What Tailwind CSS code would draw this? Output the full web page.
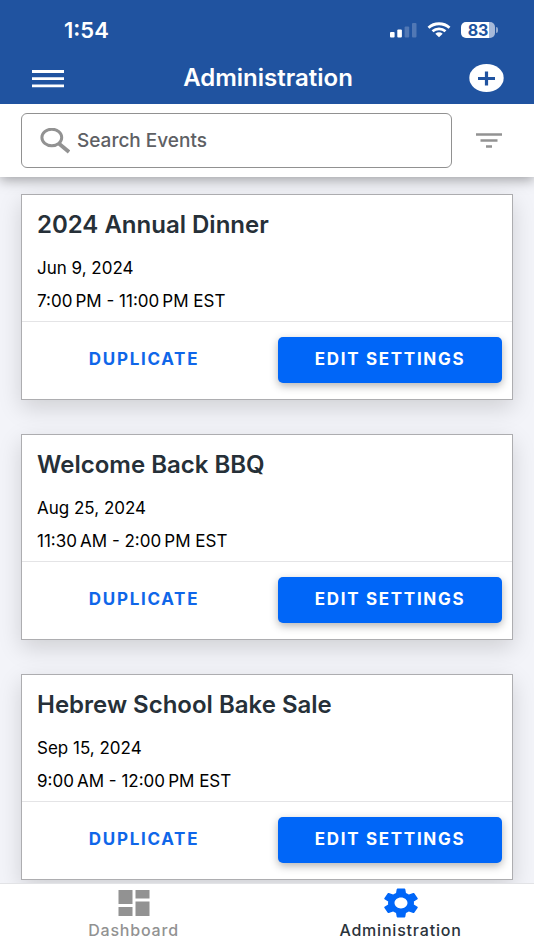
<!DOCTYPE html>
<html lang="en">
<head>
<meta charset="utf-8">
<meta name="viewport" content="width=device-width, initial-scale=1">
<title>Administration</title>
<script src="https://cdn.jsdelivr.net/npm/@tailwindcss/browser@4"></script>
</head>
<body class="flex h-screen flex-col bg-[#f3f4f9] font-['Inter',sans-serif] text-black">
  <header class="relative z-20 shrink-0 bg-[#2053a0] text-white">
    <div class="flex h-[52px] items-center justify-between pt-2 pr-9 pl-16">
      <time class="text-[22px] leading-7 font-semibold">1:54</time>
      <div class="flex items-center gap-2.5">
        <svg class="h-4 w-7" viewBox="0 0 28 16" fill="#fff" aria-label="Signal">
          <rect x="1" y="10" width="4.600" height="5.500" rx="1"/>
          <rect x="8.300" y="7.500" width="4.600" height="8" rx="1"/>
          <rect x="15.600" y="4.500" width="4.600" height="11" rx="1" opacity=".22"/>
          <rect x="23" y="1" width="4.500" height="14.500" rx="1" opacity=".22"/>
        </svg>
        <svg class="h-4 w-6" viewBox="0 0 24 16" fill="none" stroke="#fff" stroke-width="2.800" aria-label="Wi-Fi">
          <path d="M1.500 5.800C7.300.4 16.700.4 22.500 5.800"/>
          <path d="M5.500 9.300c3.700-3.200 9.300-3.200 13 0"/>
          <path d="M8.300 11.700c2.200-1.800 5.200-1.800 7.400 0L12 15.200z" fill="#fff" stroke="none"/>
        </svg>
        <div class="flex items-center gap-px">
          <div class="flex h-4 w-[34px] items-center justify-center rounded-[5px] bg-linear-to-r from-white from-83% to-[#a6b9d9] to-83% text-base leading-4 font-bold text-[#2053a0]">83</div>
          <div class="h-1.5 w-0.5 rounded-r-full bg-[#90a9d0]"></div>
        </div>
      </div>
    </div>
    <div class="grid h-[52px] grid-cols-[1fr_auto_1fr] items-center pr-[30px] pl-8">
      <button type="button" aria-label="Menu" class="justify-self-start">
        <svg class="h-5 w-8" viewBox="0 0 32 20" stroke="#fff" stroke-width="2.800"><path d="M0 3.500h32M0 10.700h32M0 17.900h32"/></svg>
      </button>
      <h1 class="text-2xl leading-7 font-semibold">Administration</h1>
      <button type="button" aria-label="Add event" class="justify-self-end">
        <svg class="h-7 w-[35px]" viewBox="0 0 35 28"><ellipse cx="17.500" cy="14" rx="17.200" ry="14" fill="#fff"/><path d="M9 14.500h17M17.500 7.500v14" stroke="#2053a0" stroke-width="3.200"/></svg>
      </button>
    </div>
  </header>

  <form role="search" class="relative z-10 flex shrink-0 items-center gap-6 bg-white py-[9px] pr-8 pl-[21px] shadow-[0_3px_12px_rgba(0,0,0,0.35)]">
    <label class="flex h-[55px] flex-1 items-center gap-[7px] rounded-md border border-[#919191] pl-[18px]">
      <svg class="h-[26px] w-[30px] shrink-0" viewBox="0 0 30 26" fill="none" stroke="#929292"><ellipse cx="11.800" cy="9.500" rx="9.900" ry="8.300" stroke-width="3"/><path d="M18.500 15.300l10.500 8.700" stroke-width="3.800"/></svg>
      <input type="search" aria-label="Search Events" placeholder="Search Events" class="w-full min-w-0 bg-transparent text-[19px] leading-7 font-medium text-[#5e6064] outline-none placeholder:text-[#5e6064]">
    </label>
    <button type="button" aria-label="Filter">
      <svg class="h-4 w-[26px]" viewBox="0 0 26 16" stroke="#929292" stroke-width="2.600"><path d="M0 1.500h26M4.500 7.500h17M10 13.500h6"/></svg>
    </button>
  </form>

  <main class="flex min-h-0 flex-1 flex-col gap-[34px] overflow-y-auto px-[21px] pt-[17px] [scrollbar-width:none]">
    <article class="shrink-0 border border-[#adadb0] bg-white shadow-[0_8px_22px_rgba(0,0,0,0.15)]">
      <div class="px-[15px] pt-4 pb-[3px]">
        <h2 class="text-2xl leading-7 font-semibold text-[#263038]">2024 Annual Dinner</h2>
        <p class="mt-[13px] text-[17px] leading-[33px]">Jun 9, 2024</p>
        <p class="text-[17px] leading-[33px]">7:00&#8239;PM - 11:00&#8239;PM EST</p>
      </div>
      <div class="grid grid-cols-2 items-center gap-[22px] border-t border-[#e4e4e6] px-2.5 pt-[15px] pb-4">
        <button type="button" class="h-[46px] text-[17px] font-bold tracking-widest text-[#0f66e9]">DUPLICATE</button>
        <button type="button" class="h-[46px] rounded-[5px] bg-[#0066f8] text-[17px] font-bold tracking-widest text-white shadow-[0_3px_8px_rgba(0,0,0,0.3)]">EDIT SETTINGS</button>
      </div>
    </article>
    <article class="shrink-0 border border-[#adadb0] bg-white shadow-[0_8px_22px_rgba(0,0,0,0.15)]">
      <div class="px-[15px] pt-4 pb-[3px]">
        <h2 class="text-2xl leading-7 font-semibold text-[#263038]">Welcome Back BBQ</h2>
        <p class="mt-[13px] text-[17px] leading-[33px]">Aug 25, 2024</p>
        <p class="text-[17px] leading-[33px]">11:30&#8239;AM - 2:00&#8239;PM EST</p>
      </div>
      <div class="grid grid-cols-2 items-center gap-[22px] border-t border-[#e4e4e6] px-2.5 pt-[15px] pb-4">
        <button type="button" class="h-[46px] text-[17px] font-bold tracking-widest text-[#0f66e9]">DUPLICATE</button>
        <button type="button" class="h-[46px] rounded-[5px] bg-[#0066f8] text-[17px] font-bold tracking-widest text-white shadow-[0_3px_8px_rgba(0,0,0,0.3)]">EDIT SETTINGS</button>
      </div>
    </article>
    <article class="shrink-0 border border-[#adadb0] bg-white shadow-[0_8px_22px_rgba(0,0,0,0.15)]">
      <div class="px-[15px] pt-4 pb-[3px]">
        <h2 class="text-2xl leading-7 font-semibold text-[#263038]">Hebrew School Bake Sale</h2>
        <p class="mt-[13px] text-[17px] leading-[33px]">Sep 15, 2024</p>
        <p class="text-[17px] leading-[33px]">9:00&#8239;AM - 12:00&#8239;PM EST</p>
      </div>
      <div class="grid grid-cols-2 items-center gap-[22px] border-t border-[#e4e4e6] px-2.5 pt-[15px] pb-4">
        <button type="button" class="h-[46px] text-[17px] font-bold tracking-widest text-[#0f66e9]">DUPLICATE</button>
        <button type="button" class="h-[46px] rounded-[5px] bg-[#0066f8] text-[17px] font-bold tracking-widest text-white shadow-[0_3px_8px_rgba(0,0,0,0.3)]">EDIT SETTINGS</button>
      </div>
    </article>
  </main>

  <nav class="relative z-10 grid shrink-0 grid-cols-2 border-t border-[#e2e3e6] bg-white pt-1 pb-2 text-base leading-6 font-medium tracking-wider">
    <a href="#dashboard" class="flex flex-col items-center text-[#929292]">
      <svg class="h-[30px] w-[34px]" viewBox="0 0 34 30" fill="currentColor" aria-hidden="true"><path d="M1.500 2h14v14h-14zM18.500 2h14v8.500h-14zM18.500 13.500h14V28h-14zM1.500 19h14v9h-14z"/></svg>
      Dashboard
    </a>
    <a href="#administration" aria-current="page" class="flex flex-col items-center text-[#2b333b]">
      <svg class="h-[30px] w-9" viewBox="2 2 20 20" preserveAspectRatio="none" fill="#0066f8" aria-hidden="true"><path d="M19.140 12.940c.04-.3.060-.61.060-.94 0-.32-.02-.64-.07-.94l2.030-1.580c.18-.14.230-.41.120-.61l-1.920-3.320c-.12-.22-.37-.29-.59-.22l-2.390.96c-.5-.38-1.030-.7-1.620-.94L14.400 2.810c-.04-.24-.24-.41-.48-.41h-3.840c-.24 0-.43.17-.47.41L9.250 5.350c-.59.24-1.130.57-1.620.94l-2.390-.96c-.22-.08-.47 0-.59.22L2.740 8.870c-.12.21-.08.47.12.61l2.030 1.580c-.05.3-.09.63-.09.94s.02.640.07.940l-2.030 1.580c-.18.14-.23.41-.12.61l1.920 3.320c.12.22.37.29.59.22l2.390-.96c.5.38 1.030.7 1.620.94l.36 2.540c.05.24.24.41.48.41h3.840c.24 0 .44-.17.47-.41l.36-2.540c.59-.24 1.130-.56 1.620-.94l2.390.96c.22.08.47 0 .59-.22l1.920-3.320c.12-.22.07-.47-.12-.61zM12 15.600c-1.980 0-3.600-1.620-3.600-3.600s1.620-3.600 3.600-3.600 3.600 1.620 3.600 3.600-1.620 3.600-3.600 3.600z"/></svg>
      Administration
    </a>
  </nav>
</body>
</html>
